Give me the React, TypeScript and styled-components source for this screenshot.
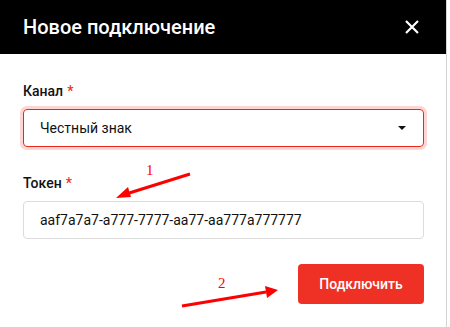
import React from "react";
import styled, { createGlobalStyle } from "styled-components";

const Global = createGlobalStyle`
  html, body { margin: 0; padding: 0; background: #ffffff; }
  body { font-family: Roboto, "Noto Sans", Arial, sans-serif; }
  * { box-sizing: border-box; }
`;

const Page = styled.div`
  position: relative;
  width: 450px;
  height: 327px;
  overflow: hidden;
  background: #ffffff;
`;

const Modal = styled.div`
  width: 447px;
  height: 327px;
  border-right: 1px solid #d4d4d4;
  background: #ffffff;
  display: flex;
  flex-direction: column;
`;

const Header = styled.div`
  height: 54px;
  background: #000000;
  display: flex;
  align-items: center;
  justify-content: space-between;
  padding: 0 27px 0 23px;
`;

const Title = styled.h2`
  margin: 0;
  color: #ffffff;
  font-size: 20px;
  font-weight: 500;
  line-height: 24px;
  letter-spacing: 0;
`;

const CloseBtn = styled.button`
  width: 14px;
  height: 14px;
  padding: 0;
  border: 0;
  background: transparent;
  display: flex;
  align-items: center;
  justify-content: center;
  cursor: pointer;
`;

const Body = styled.div`
  padding: 27px 22px 0 23px;
  display: flex;
  flex-direction: column;
`;

const Field = styled.div<{ $gap?: number }>`
  display: flex;
  flex-direction: column;
  margin-bottom: ${(p) => p.$gap ?? 0}px;
`;

const Label = styled.label`
  font-size: 14px;
  font-weight: 500;
  line-height: 20px;
  color: #111111;
  margin-bottom: 8px;
`;

const Star = styled.span`
  color: #ee3124;
  margin-left: 4px;
`;

const Select = styled.div`
  height: 38px;
  border: 1px solid #e8281c;
  border-radius: 4px;
  box-shadow: 0 0 0 3px #fdd5d2;
  display: flex;
  align-items: center;
  justify-content: space-between;
  padding: 0 17px 0 16px;
  font-size: 14px;
  color: #111111;
`;

const Caret = styled.span`
  width: 0;
  height: 0;
  border-left: 4px solid transparent;
  border-right: 4px solid transparent;
  border-top: 4px solid #111111;
`;

const Input = styled.div`
  height: 38px;
  border: 1px solid #dcdcdc;
  border-radius: 4px;
  display: flex;
  align-items: center;
  padding: 0 16px;
  font-size: 14px;
  color: #111111;
`;

const Footer = styled.div`
  display: flex;
  justify-content: flex-end;
  margin-top: 25px;
`;

const Primary = styled.button`
  width: 126px;
  height: 40px;
  border: 0;
  border-radius: 4px;
  background: #ee3124;
  color: #ffffff;
  font-family: Roboto, Arial, sans-serif;
  font-size: 14px;
  font-weight: 500;
  cursor: pointer;
`;

const Annotation = styled.svg`
  position: absolute;
  left: 0;
  top: 0;
  pointer-events: none;
`;

const Num = styled.span<{ $x: number; $y: number }>`
  position: absolute;
  left: ${(p) => p.$x}px;
  top: ${(p) => p.$y}px;
  font-family: "Liberation Serif", "Times New Roman", serif;
  font-size: 15px;
  line-height: 16px;
  color: #ff0000;
`;

export default function App() {
  return (
    <>
      <Global />
      <Page>
        <Modal>
          <Header>
            <Title>Новое подключение</Title>
            <CloseBtn aria-label="close">
              <svg width="14" height="14" viewBox="0 0 14 14">
                <path d="M1 1 L13 13 M13 1 L1 13" stroke="#ffffff" strokeWidth="2.2" />
              </svg>
            </CloseBtn>
          </Header>
          <Body>
            <Field $gap={26}>
              <Label>
                Канал<Star>*</Star>
              </Label>
              <Select>
                <span>Честный знак</span>
                <Caret />
              </Select>
            </Field>
            <Field>
              <Label>
                Токен<Star>*</Star>
              </Label>
              <Input>aaf7a7a7-a777-7777-aa77-aa777a777777</Input>
            </Field>
            <Footer>
              <Primary>Подключить</Primary>
            </Footer>
          </Body>
        </Modal>
        <Annotation width="450" height="327" viewBox="0 0 450 327">
          <line x1="190" y1="174" x2="126" y2="194" stroke="#ff0000" strokeWidth="3" />
          <polygon points="116,198 128,187 131,197" fill="#ff0000" />
          <line x1="182" y1="306" x2="266" y2="292" stroke="#ff0000" strokeWidth="3" />
          <polygon points="278,290 265,286 267,298" fill="#ff0000" />
        </Annotation>
        <Num $x={146} $y={162}>1</Num>
        <Num $x={218} $y={275}>2</Num>
      </Page>
    </>
  );
}
